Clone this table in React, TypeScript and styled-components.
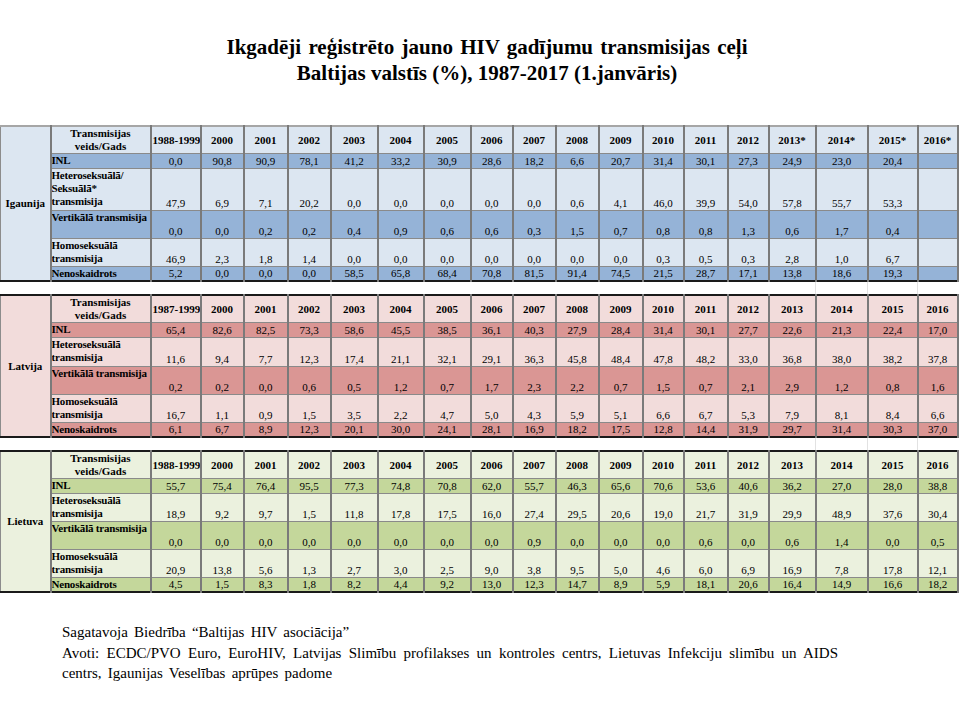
import React from 'react';
import styled, { createGlobalStyle } from 'styled-components';

const GlobalStyle = createGlobalStyle`
  html, body {
    margin: 0;
    padding: 0;
    background: #fff;
  }
  body {
    font-family: "Liberation Serif", "Times New Roman", serif;
    color: #000;
  }
`;

type Tone = 'blue' | 'red' | 'green';

const palette: Record<Tone, { light: string; dark: string; top: string }> = {
  blue: { light: '#dce6f1', dark: '#95b3d7', top: '#a6a6a6' },
  red: { light: '#f2dcdb', dark: '#da9694', top: '#1a1a1a' },
  green: { light: '#ebf1de', dark: '#c4d79b', top: '#1a1a1a' },
};

const colWidths = [50, 100, 50, 43, 44, 43, 47, 46, 47, 42, 43, 43, 44, 41, 44, 41, 47, 52, 50, 40];

const Page = styled.div`
  width: 960px;
  height: 720px;
  display: flex;
  flex-direction: column;
  overflow: hidden;
`;

const Title = styled.h1`
  margin: 34px 0 0;
  padding-left: 14px;
  font-size: 21px;
  font-weight: bold;
  line-height: 26px;
  text-align: center;
`;

const TitleLine = styled.span<{ $spacing: number }>`
  word-spacing: ${p => p.$spacing}px;
`;

const Sheet = styled.table`
  margin-top: 39px;
  width: 957px;
  table-layout: fixed;
  border-collapse: collapse;
  font-size: 11px;
  line-height: 13px;
`;

const Block = styled.tbody<{ $tone: Tone }>`
  border-top: 2px solid ${p => palette[p.$tone].top};
  border-bottom: 2px solid #1a1a1a;
  border-right: 2px solid #333;
  border-left: 1px solid #8c8c8c;
`;

const Row = styled.tr<{ $h: number }>`
  height: ${p => p.$h}px;
`;

const Cell = styled.td<{ $tone: Tone; $dark?: boolean }>`
  padding: 0 1px;
  background: ${p => (p.$dark ? palette[p.$tone].dark : palette[p.$tone].light)};
  border-left: 2px solid #7a7a7a;
  border-right: 2px solid #7a7a7a;
  border-top: 1px solid #8a8a8a;
  border-bottom: 1px solid #8a8a8a;
  text-align: center;
  vertical-align: bottom;
  white-space: nowrap;
  overflow: hidden;
`;

const Country = styled(Cell)`
  font-weight: bold;
  vertical-align: middle;
  border-left: 1px solid #8c8c8c;
`;

const HeadCell = styled(Cell)`
  font-weight: bold;
  vertical-align: middle;
`;

const Label = styled(Cell)`
  padding: 0;
  font-weight: bold;
  text-align: left;
  vertical-align: top;
  letter-spacing: -0.2px;
`;

const GapRow = styled.tr`
  height: 14px;
`;

const GapCell = styled.td<{ $line?: boolean }>`
  padding: 0;
  background: #fff;
  border-left: 1px solid ${p => (p.$line ? '#e2e2e2' : 'transparent')};
`;

const Notes = styled.div`
  margin-top: 29px;
  padding-left: 62px;
  width: 776px;
  font-size: 15px;
  line-height: 20.5px;
`;

const NoteLine = styled.div<{ $justify?: boolean }>`
  text-align: ${p => (p.$justify ? 'justify' : 'left')};
  text-align-last: ${p => (p.$justify ? 'justify' : 'auto')};
  word-spacing: ${p => (p.$justify ? '0' : '2.5px')};
`;

type Country = {
  name: string;
  tone: Tone;
  years: string[];
  heteroLabel: React.ReactNode;
  heteroHeight: number;
  rows: {
    inl: string[];
    hetero: string[];
    vert: string[];
    homo: string[];
    neno: string[];
  };
};

const split = (s: string) => s.split(' ').map(v => (v === '-' ? '' : v));

const years = (first: string, star = false) => [
  first,
  ...Array.from({ length: 13 }, (_, i) => String(2000 + i)),
  ...['2013', '2014', '2015', '2016'].map(y => (star ? y + '*' : y)),
];

const countries: Country[] = [
  {
    name: 'Igaunija',
    tone: 'blue',
    years: years('1988-1999', true),
    heteroLabel: (
      <>
        Heteroseksuālā/
        <br />
        Seksuālā*
        <br />
        transmisija
      </>
    ),
    heteroHeight: 42,
    rows: {
      inl: split('0,0 90,8 90,9 78,1 41,2 33,2 30,9 28,6 18,2 6,6 20,7 31,4 30,1 27,3 24,9 23,0 20,4 -'),
      hetero: split('47,9 6,9 7,1 20,2 0,0 0,0 0,0 0,0 0,0 0,6 4,1 46,0 39,9 54,0 57,8 55,7 53,3 -'),
      vert: split('0,0 0,0 0,2 0,2 0,4 0,9 0,6 0,6 0,3 1,5 0,7 0,8 0,8 1,3 0,6 1,7 0,4 -'),
      homo: split('46,9 2,3 1,8 1,4 0,0 0,0 0,0 0,0 0,0 0,0 0,0 0,3 0,5 0,3 2,8 1,0 6,7 -'),
      neno: split('5,2 0,0 0,0 0,0 58,5 65,8 68,4 70,8 81,5 91,4 74,5 21,5 28,7 17,1 13,8 18,6 19,3 -'),
    },
  },
  {
    name: 'Latvija',
    tone: 'red',
    years: years('1987-1999'),
    heteroLabel: (
      <>
        Heteroseksuālā
        <br />
        transmisija
      </>
    ),
    heteroHeight: 29,
    rows: {
      inl: split('65,4 82,6 82,5 73,3 58,6 45,5 38,5 36,1 40,3 27,9 28,4 31,4 30,1 27,7 22,6 21,3 22,4 17,0'),
      hetero: split('11,6 9,4 7,7 12,3 17,4 21,1 32,1 29,1 36,3 45,8 48,4 47,8 48,2 33,0 36,8 38,0 38,2 37,8'),
      vert: split('0,2 0,2 0,0 0,6 0,5 1,2 0,7 1,7 2,3 2,2 0,7 1,5 0,7 2,1 2,9 1,2 0,8 1,6'),
      homo: split('16,7 1,1 0,9 1,5 3,5 2,2 4,7 5,0 4,3 5,9 5,1 6,6 6,7 5,3 7,9 8,1 8,4 6,6'),
      neno: split('6,1 6,7 8,9 12,3 20,1 30,0 24,1 28,1 16,9 18,2 17,5 12,8 14,4 31,9 29,7 31,4 30,3 37,0'),
    },
  },
  {
    name: 'Lietuva',
    tone: 'green',
    years: years('1988-1999'),
    heteroLabel: (
      <>
        Heteroseksuālā
        <br />
        transmisija
      </>
    ),
    heteroHeight: 28,
    rows: {
      inl: split('55,7 75,4 76,4 95,5 77,3 74,8 70,8 62,0 55,7 46,3 65,6 70,6 53,6 40,6 36,2 27,0 28,0 38,8'),
      hetero: split('18,9 9,2 9,7 1,5 11,8 17,8 17,5 16,0 27,4 29,5 20,6 19,0 21,7 31,9 29,9 48,9 37,6 30,4'),
      vert: split('0,0 0,0 0,0 0,0 0,0 0,0 0,0 0,0 0,9 0,0 0,0 0,0 0,6 0,0 0,6 1,4 0,0 0,5'),
      homo: split('20,9 13,8 5,6 1,3 2,7 3,0 2,5 9,0 3,8 9,5 5,0 4,6 6,0 6,9 16,9 7,8 17,8 12,1'),
      neno: split('4,5 1,5 8,3 1,8 8,2 4,4 9,2 13,0 12,3 14,7 8,9 5,9 18,1 20,6 16,4 14,9 16,6 18,2'),
    },
  },
];

const CountryBlock: React.FC<{ c: Country }> = ({ c }) => {
  const t = c.tone;
  const lines: { key: keyof Country['rows']; label: React.ReactNode; h: number; dark: boolean }[] = [
    { key: 'inl', label: 'INL', h: 15, dark: true },
    { key: 'hetero', label: c.heteroLabel, h: c.heteroHeight, dark: false },
    { key: 'vert', label: 'Vertikālā transmisija', h: 28, dark: true },
    {
      key: 'homo',
      label: (
        <>
          Homoseksuālā
          <br />
          transmisija
        </>
      ),
      h: 28,
      dark: false,
    },
    { key: 'neno', label: 'Nenoskaidrots', h: 13, dark: true },
  ];

  return (
    <Block $tone={t}>
      <Row $h={27}>
        <Country $tone={t} rowSpan={6}>
          {c.name}
        </Country>
        <HeadCell $tone={t}>
          Transmisijas
          <br />
          veids/Gads
        </HeadCell>
        {c.years.map(y => (
          <HeadCell key={y} $tone={t}>
            {y}
          </HeadCell>
        ))}
      </Row>
      {lines.map(line => (
        <Row key={line.key} $h={line.h}>
          <Label $tone={t} $dark={line.dark}>
            {line.label}
          </Label>
          {c.rows[line.key].map((v, i) => (
            <Cell key={i} $tone={t} $dark={line.dark}>
              {v}
            </Cell>
          ))}
        </Row>
      ))}
    </Block>
  );
};

const Gap: React.FC = () => (
  <tbody>
    <GapRow>
      {colWidths.map((_, i) => (
        <GapCell key={i} $line={i >= 17} />
      ))}
    </GapRow>
  </tbody>
);

export default function App() {
  return (
    <Page>
      <GlobalStyle />
      <Title>
        <TitleLine $spacing={2}>Ikgadēji reģistrēto jauno HIV gadījumu transmisijas ceļi</TitleLine>
        <br />
        <TitleLine $spacing={0}>Baltijas valstīs (%), 1987-2017 (1.janvāris)</TitleLine>
      </Title>

      <Sheet>
        <colgroup>
          {colWidths.map((w, i) => (
            <col key={i} style={{ width: w }} />
          ))}
        </colgroup>
        {countries.map((c, i) => (
          <React.Fragment key={c.name}>
            {i > 0 && <Gap />}
            <CountryBlock c={c} />
          </React.Fragment>
        ))}
      </Sheet>

      <Notes>
        <NoteLine>Sagatavoja Biedrība “Baltijas HIV asociācija”</NoteLine>
        <NoteLine $justify>
          Avoti: ECDC/PVO Euro, EuroHIV, Latvijas Slimību profilakses un kontroles centrs, Lietuvas Infekciju slimību un AIDS
        </NoteLine>
        <NoteLine>centrs, Igaunijas Veselības aprūpes padome</NoteLine>
      </Notes>
    </Page>
  );
}
